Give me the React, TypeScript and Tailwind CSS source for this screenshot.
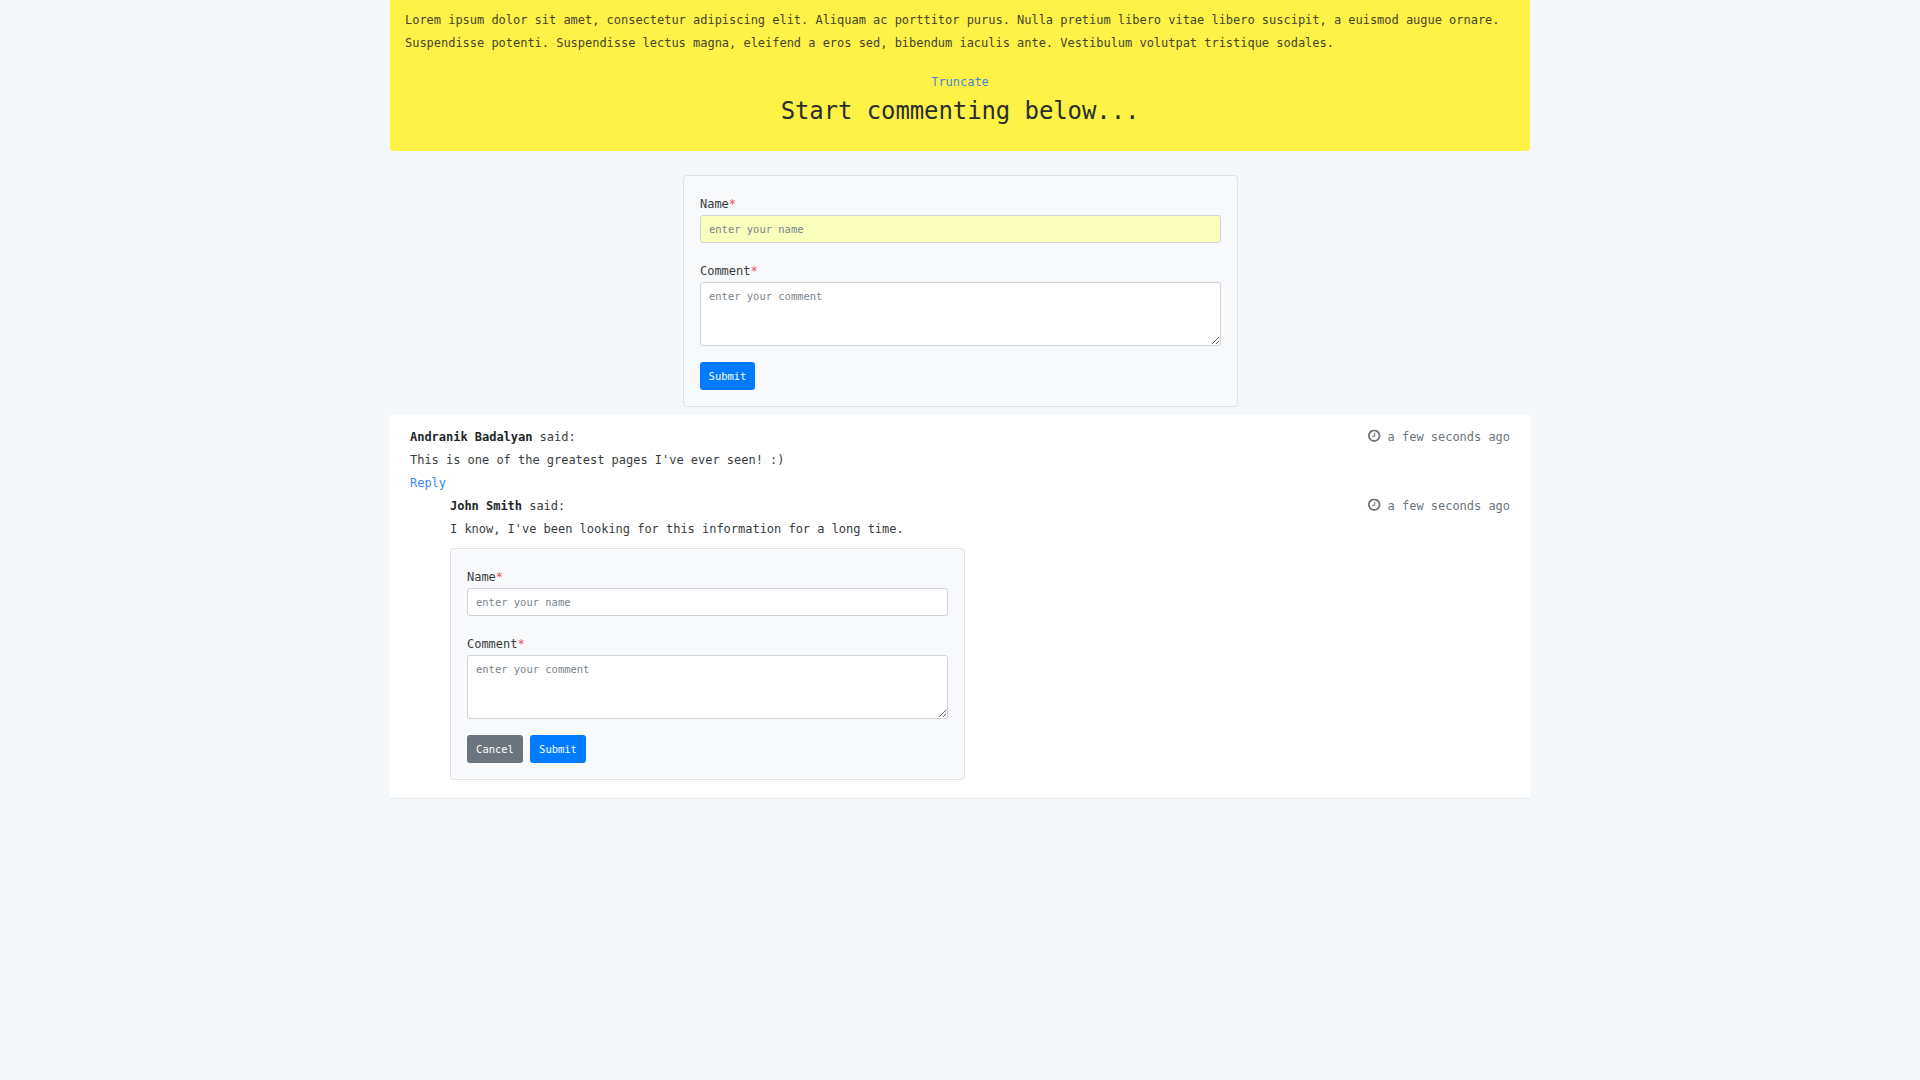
import React from "react";

function ClockIcon() {
  return (
    <svg viewBox="0 128 1536 1536" className="mr-[7px] size-[12.4px] -translate-y-[1.5px]" fill="currentColor" aria-hidden="true">
      <path d="M896 544v448q0 14-9 23t-23 9h-320q-14 0-23-9t-9-23v-64q0-14 9-23t23-9h224v-352q0-14 9-23t23-9h64q14 0 23 9t9 23zm416 352q0-148-73-273t-198-198-273-73-273 73-198 198-73 273 73 273 198 198 273 73 273-73 198-198 73-273zm224 0q0 209-103 385.5t-279.5 279.5-385.5 103-385.5-103-279.5-279.5-103-385.5 103-385.5 279.5-279.5 385.5-103 385.5 103 279.5 279.5 103 385.5z" />
    </svg>
  );
}

const field =
  "block w-full rounded-[3px] border border-[#ced4da] px-2 text-[10.5px] tracking-[-0.021px] text-[#495057] placeholder:text-[#7b848c] placeholder:opacity-100 outline-none";
const button = "h-7 rounded-[3px] px-2 text-[10.5px] leading-7 tracking-[-0.021px] text-white";

function Label({ children }: { children: string }) {
  return (
    <label className="block h-[23px] pt-px leading-[23px]">
      {children}
      <span className="text-[#e4505e]">*</span>
    </label>
  );
}

function CommentForm({ highlighted = false, cancel = false }: { highlighted?: boolean; cancel?: boolean }) {
  return (
    <form className="h-[232px] rounded border border-[#dee2e6] bg-[#f8f9fa] px-4 pt-4">
      <Label>Name</Label>
      <input
        placeholder="enter your name"
        className={`${field} h-7 ${highlighted ? "bg-[#faffbd]" : "bg-white"}`}
      />
      <div className="mt-4">
        <Label>Comment</Label>
        <textarea placeholder="enter your comment" className={`${field} h-16 resize bg-white py-1 leading-[19px]`} />
      </div>
      <div className="mt-4 flex gap-[7px]">
        {cancel && (
          <button type="button" className={`${button} w-14 bg-[#6c757d]`}>
            Cancel
          </button>
        )}
        <button type="button" className={`${button} ${cancel ? "w-14" : "w-[55px]"} bg-[#007bff]`}>
          Submit
        </button>
      </div>
    </form>
  );
}

function CommentHeader({ author }: { author: string }) {
  return (
    <div className="flex justify-between">
      <div>
        <b className="text-[#212529]">{author}</b> said:
      </div>
      <div className="flex items-center text-[#6c757d]">
        <ClockIcon />a few seconds ago
      </div>
    </div>
  );
}

export default function App() {
  return (
    <div className="min-h-screen bg-[#f4f8fb] font-['DejaVu_Sans_Mono',monospace] text-[12px] leading-[23px] tracking-[-0.024px] text-[#383c40]">
      <main className="mx-auto w-[1140px]">
        <section className="h-[151px] rounded-b bg-[#fff247] px-[15px] pt-[9px]">
          <p className="text-[#45452f]">
            Lorem ipsum dolor sit amet, consectetur adipiscing elit. Aliquam ac porttitor purus. Nulla pretium libero
            vitae libero suscipit, a euismod augue ornare. Suspendisse potenti. Suspendisse lectus magna, eleifend a
            eros sed, bibendum iaculis ante. Vestibulum volutpat tristique sodales.
          </p>
          <div className="mt-4 text-center">
            <a className="block text-[#4a86d8]">Truncate</a>
            <h2 className="text-[24px] leading-[35px] tracking-[-0.1px] text-[#2b2e2c]">Start commenting below...</h2>
          </div>
        </section>

        <div className="ml-[293px] mt-6 w-[555px]">
          <CommentForm highlighted />
        </div>

        <section className="mt-2 h-[384px] border-b border-[#e9edf0] bg-white px-5 pt-[11px]">
          <CommentHeader author="Andranik Badalyan" />
          <p>This is one of the greatest pages I've ever seen! :)</p>
          <a className="block text-[#3d86f7]">Reply</a>
          <div className="pl-10">
            <CommentHeader author="John Smith" />
            <p>I know, I've been looking for this information for a long time.</p>
            <div className="mt-[7px] w-[515px]">
              <CommentForm cancel />
            </div>
          </div>
        </section>
      </main>
    </div>
  );
}
